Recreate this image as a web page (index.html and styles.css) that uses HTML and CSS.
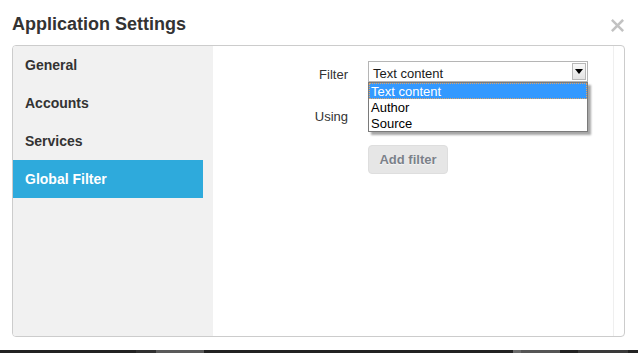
FILE: index.html
```html
<!DOCTYPE html>
<html>
<head>
    <meta charset="UTF-8">
    <title>Application Settings</title>
    <link rel="stylesheet" href="styles.css">
</head>
<body>
    <div class="modal">
        <div class="modal-header">
            <h3 class="modal-title">Application Settings</h3>
            <span class="close">
                <svg width="13" height="13" viewBox="0 0 13 13">
                    <path d="M1.8 1.8 L11.2 11.2 M11.2 1.8 L1.8 11.2" stroke="#c2c2c2" stroke-width="2.6" stroke-linecap="square"/>
                </svg>
            </span>
        </div>

        <div class="panel">
            <ul class="sidebar">
                <li class="nav-item">General</li>
                <li class="nav-item">Accounts</li>
                <li class="nav-item">Services</li>
                <li class="nav-item active">Global Filter</li>
            </ul>

            <div class="content">
                <div class="form-area">
                    <div class="form-row">
                        <label class="control-label">Filter</label>
                        <div class="select-wrap">
                            <div class="select">
                                <span>Text content</span>
                                <span class="select-btn">
                                    <svg width="8" height="5" viewBox="0 0 8 5"><path d="M0 0 H8 L4 5 Z" fill="#000"/></svg>
                                </span>
                            </div>
                            <ul class="dropdown">
                                <li class="option selected">Text content</li>
                                <li class="option">Author</li>
                                <li class="option">Source</li>
                            </ul>
                        </div>
                    </div>

                    <div class="form-row">
                        <label class="control-label">Using</label>
                        <div class="select-wrap">
                            <div class="select"></div>
                        </div>
                    </div>

                    <div class="form-row actions">
                        <span></span>
                        <div>
                            <button class="btn" disabled>Add filter</button>
                        </div>
                    </div>
                </div>
            </div>
        </div>

        <div class="taskbar">
            <span class="tb-a"></span>
            <span class="tb-b"></span>
            <span class="tb-gap"></span>
            <span class="tb-c"></span>
            <span class="tb-d"></span>
            <span class="tb-gap2"></span>
            <span class="tb-e"></span>
        </div>
    </div>
</body>
</html>
```

FILE: styles.css
```css
:root {
    --text-color: #333333;
    --border-color: #cccccc;
    --active-color: #2eaadc;
    --sidebar-color: #f1f1f1;
}

body {
    margin: 0;
    background: #ffffff;
    font-family: 'Liberation Sans', Arial, sans-serif;
    color: var(--text-color);
}

.modal {
    width: 638px;
    height: 353px;
    display: flex;
    flex-direction: column;
    background: #ffffff;
}

.modal-header {
    height: 45px;
    box-sizing: border-box;
    padding: 13px 14px 0 12px;
    display: flex;
    justify-content: space-between;
    align-items: flex-start;
}

.modal-title {
    margin: 0;
    font-size: 18px;
    line-height: 22px;
    font-weight: bold;
    color: var(--text-color);
}

.close {
    display: block;
    margin-top: 6px;
    height: 13px;
}

.close svg {
    display: block;
}

.panel {
    margin: 0 13px 0 12px;
    height: 292px;
    box-sizing: border-box;
    border: 1px solid var(--border-color);
    border-radius: 4px;
    overflow: hidden;
    display: flex;
}

.sidebar {
    width: 200px;
    margin: 0;
    padding: 0 10px 0 0;
    box-sizing: border-box;
    list-style: none;
    background: var(--sidebar-color);
}

.nav-item {
    height: 38px;
    line-height: 38px;
    padding-left: 12px;
    font-size: 14px;
    font-weight: bold;
    color: var(--text-color);
}

.nav-item.active {
    background: var(--active-color);
    color: #ffffff;
}

.content {
    flex: 1;
    padding-right: 10px;
    display: flex;
}

.form-area {
    flex: 1;
    border-right: 1px solid #efefef;
    padding-top: 15px;
}

.form-row {
    display: grid;
    grid-template-columns: 135px 220px;
    column-gap: 20px;
    margin-bottom: 21px;
}

.form-row.actions {
    margin-top: 3px;
}

.control-label {
    text-align: right;
    font-size: 13px;
    line-height: 20px;
    padding-top: 4px;
    height: 17px;
}

.select-wrap {
    position: relative;
}

.select {
    height: 21px;
    box-sizing: border-box;
    border: 1px solid #b5b5b5;
    background: #ffffff;
    padding: 4px 0 0 4px;
    font-size: 13px;
    line-height: 15px;
    color: #1a1a1a;
    position: relative;
}

.select-btn {
    position: absolute;
    right: 1px;
    top: 1px;
    width: 14px;
    height: 17px;
    box-sizing: border-box;
    border: 1px solid #b8b8b8;
    background: linear-gradient(#f8f8f8, #e4e4e4);
    display: flex;
    align-items: center;
    justify-content: center;
}

.dropdown {
    position: absolute;
    top: 21px;
    left: 0;
    width: 220px;
    margin: 0;
    padding: 0;
    box-sizing: border-box;
    list-style: none;
    background: #ffffff;
    border: 1px solid #7a7a7a;
    box-shadow: 3px 3px 2px rgba(0, 0, 0, 0.35);
    z-index: 2;
}

.option {
    height: 16px;
    line-height: 15px;
    padding: 1px 0 0 2px;
    font-size: 13px;
    color: #000000;
    box-sizing: border-box;
}

.option.selected {
    background: #3399ff;
    color: #ffffff;
    outline: 1px dotted #e0a468;
    outline-offset: -1px;
}

.btn {
    width: 80px;
    height: 29px;
    padding: 0;
    border: 1px solid #dedede;
    border-radius: 4px;
    background: #e6e6e6;
    font-family: 'Liberation Sans', Arial, sans-serif;
    font-size: 13px;
    font-weight: bold;
    color: #7b8189;
    text-shadow: 0 1px 1px rgba(255, 255, 255, 0.75);
}

.taskbar {
    margin-top: auto;
    height: 3px;
    display: flex;
    background: #222222;
}

.taskbar span {
    display: block;
    height: 3px;
}

.tb-a { width: 136px; }
.tb-b { width: 68px; background: linear-gradient(90deg, #303030 0 20px, #5a5a5a 20px); }
.tb-gap { width: 309px; }
.tb-c { width: 8px; background: #6a6a6a; }
.tb-d { width: 39px; background: #555555; }
.tb-gap2 { width: 18px; }
.tb-e { width: 50px; background: #3a3a3a; }
```
